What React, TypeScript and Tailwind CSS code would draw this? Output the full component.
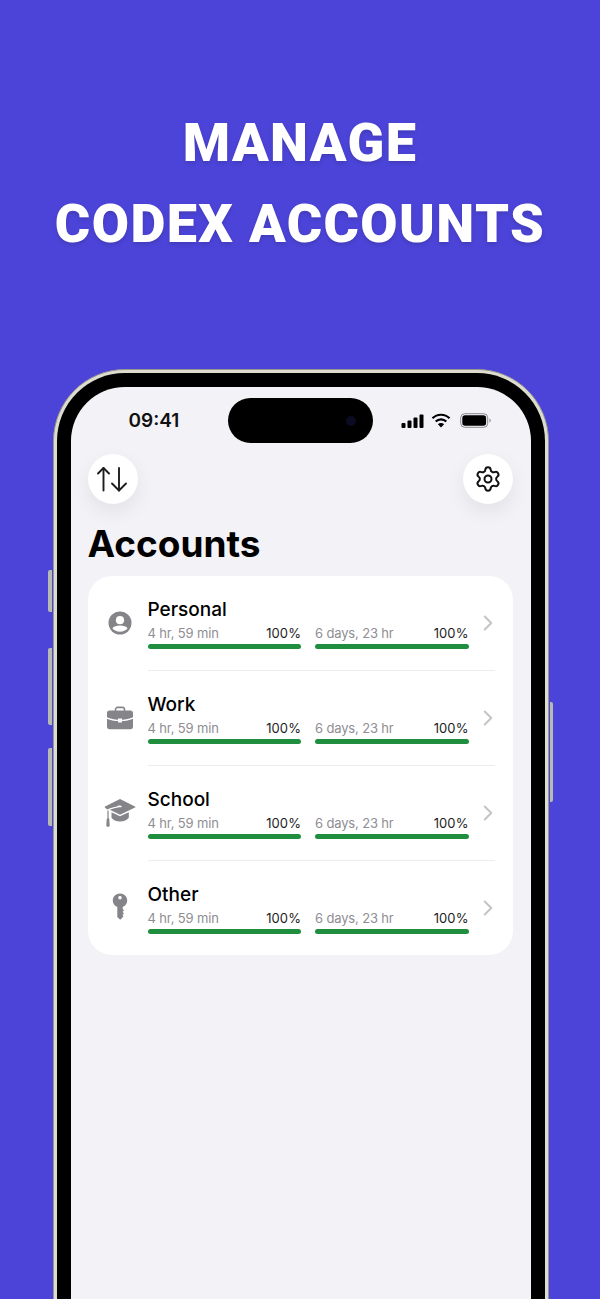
import React from "react";
import { ChevronRight, Settings } from "lucide-react";

function PersonIcon() {
  return (
    <svg width="24" height="24" viewBox="0 0 24 24" fill="none">
      <circle cx="12" cy="12" r="11.5" fill="#858589" />
      <circle cx="12" cy="9.2" r="4.1" fill="#fff" />
      <path d="M4.400 17.600C5.600 15.300 8.400 14.600 12 14.600s6.400.7 7.600 3C17.800 19.600 15.100 20.800 12 20.800s-5.800-1.200-7.600-3.200Z" fill="#fff" />
    </svg>
  );
}
function BriefcaseIcon() {
  return (
    <svg width="28" height="24" viewBox="0 0 28 24" fill="none">
      <path d="M9.500 5V3.600C9.500 2.200 10.400 1.400 11.800 1.400h4.400c1.400 0 2.300.8 2.300 2.200V5" stroke="#858589" strokeWidth="1.600" />
      <path d="M3.400 4.600h21.200c1.400 0 2.400 1 2.400 2.400v4.200c-3.600 1.500-7.400 2.300-11 2.500v-1.200h-4v1.200c-3.600-.2-7.400-1-11-2.500V7c0-1.400 1-2.400 2.400-2.400Z" fill="#858589" />
      <path d="M1 12.700c3.600 1.400 7.400 2.200 11 2.400v1.500h4v-1.500c3.600-.2 7.400-1 11-2.400v8c0 1.500-1 2.500-2.400 2.500H3.400C2 23.200 1 22.200 1 20.700v-8Z" fill="#858589" />
    </svg>
  );
}
function CapIcon() {
  return (
    <svg width="32" height="30" viewBox="0 0 32 30" fill="none">
      <path d="M16 1 31 8.400c.5.3.5.8 0 1.100L16 16.800 5.800 11.800c2.800-1.200 6.200-2.200 9.600-2.600.9.2 1.700.1 2.200-.3.5-.6-.2-1.200-1.600-1.300-1.600-.1-2.800.4-2.800 1-3.600.5-7.200 1.600-10 3L1 9.500c-.5-.3-.5-.8 0-1.100L16 1Z" fill="#858589" />
      <path d="M7.500 14.200 16 18.300l8.800-4.100v5.600c-1.500 2.200-5 3.700-8.800 3.700-3.800 0-7.100-1.500-8.500-3.700v-5.600Z" fill="#858589" />
      <path d="M4 12.400v8" stroke="#858589" strokeWidth="1.200" />
      <path d="M2.700 21.500c0-1 .6-1.600 1.300-1.600s1.300.6 1.300 1.600l.4 6c0 .7-.7 1.300-1.700 1.300s-1.700-.6-1.700-1.300l.4-6Z" fill="#858589" />
    </svg>
  );
}
function KeyIcon() {
  return (
    <svg width="16" height="28" viewBox="0 0 16 28" fill="none">
      <path fillRule="evenodd" clipRule="evenodd" d="M8 .5c4 0 7.200 3 7.200 6.900 0 3-1.900 5.500-4.500 6.500v2.100l1.300 1.300-1.400 1.600 1.400 1.500-1.500 1.600 1 1.200-2.600 3c-.4.400-.8.400-1.200 0L5.300 24V13.900C2.700 12.900.8 10.400.8 7.400.8 3.500 4 .5 8 .5Zm0 2.600c-1 0-1.700.7-1.700 1.600 0 1 .7 1.700 1.700 1.700s1.700-.7 1.700-1.700c0-.9-.7-1.600-1.700-1.600Z" fill="#858589" />
    </svg>
  );
}

function Usage({ label }: { label: string }) {
  return (
    <div className="flex-1">
      <div className="flex justify-between items-center h-[16px] text-[13px] leading-[16px]">
        <span className="text-[#8e8e93] tracking-[-0.15px]">{label}</span>
        <span className="text-[#1c1c1e] tracking-[0.1px]">100%</span>
      </div>
      <div className="mt-[3px] h-[5px] rounded-full bg-[#1f8f3f]" />
    </div>
  );
}

function Row({ name, icon, last }: { name: string; icon: React.ReactNode; last?: boolean }) {
  return (
    <div className={`flex ${last ? "h-[94px]" : "h-[95px]"}`}>
      <div className="w-[60px] shrink-0 flex items-center justify-center pl-[4px] pb-[2px]">{icon}</div>
      <div className={`flex-1 flex mr-[18px] ${last ? "" : "border-b border-[#ececee]"}`}>
        <div className="w-[321px] pt-[22px]">
          <div className="text-[19px] leading-[24px] font-medium text-black">{name}</div>
          <div className="flex gap-[14px] mt-[3px]">
            <Usage label="4 hr, 59 min" />
            <Usage label="6 days, 23 hr" />
          </div>
        </div>
        <div className="flex-1 flex justify-end pt-[34px]">
          <ChevronRight size={26} strokeWidth={1.9} className="text-[#c5c5c9] -mr-[6px]" />
        </div>
      </div>
    </div>
  );
}

function Circle({ children }: { children: React.ReactNode }) {
  return (
    <div className="w-[50px] h-[50px] rounded-full bg-white flex items-center justify-center shadow-[0_8px_20px_rgba(0,0,0,0.07)]">
      {children}
    </div>
  );
}

export default function App() {
  return (
    <div className="h-[1299px] overflow-hidden bg-[#4c44d8] flex flex-col items-center [font-family:Inter,'Liberation_Sans',sans-serif]">
      <h1 className="pt-[102px] text-center text-white font-black text-[54px] leading-[81px] tracking-[1.4px] [font-family:Roboto,sans-serif] [text-shadow:0_2px_4px_rgba(0,0,0,0.15)]">
        <div>MANAGE</div>
        <div>CODEX ACCOUNTS</div>
      </h1>
      <div className="relative self-start ml-[52.500px] mt-[105px] w-[496px] h-[1000px] shrink-0 rounded-[72px] border-[1.5px] border-[#96978f] bg-[#dcdccf] p-[3px]">
        <div className="absolute -left-[6px] top-[200px] w-[4px] h-[42px] rounded-l-[2px] bg-[#b7b9b4]" />
        <div className="absolute -left-[6px] top-[278px] w-[4px] h-[77px] rounded-l-[2px] bg-[#b7b9b4]" />
        <div className="absolute -left-[6px] top-[378px] w-[4px] h-[78px] rounded-l-[2px] bg-[#b7b9b4]" />
        <div className="absolute -right-[5px] top-[332px] w-[3px] h-[100px] rounded-r-[2px] bg-[#b7b9b4]" />
        <div className="h-full rounded-[68px] bg-black p-[14px]">
          <div className="relative h-full rounded-[54px] bg-[#f2f2f7] pl-[17px] pr-[18px] overflow-hidden">
            <div className="flex items-center justify-between h-[67px]">
              <span className="pl-[41px] text-[19px] font-semibold text-[#111] leading-none">09:41</span>
              <div className="flex items-center gap-[6px] pr-[22px]">
                <svg width="24" height="14" viewBox="0 0 24 14" fill="#000">
                  <rect x="0.500" y="9" width="4" height="5" rx="1" />
                  <rect x="6.500" y="6.500" width="4" height="7.500" rx="1" />
                  <rect x="12.500" y="3.500" width="4" height="10.500" rx="1" />
                  <rect x="18.500" y="0.500" width="4" height="13.500" rx="1" />
                </svg>
                <svg width="20" height="15" viewBox="0 0 20 15" fill="none">
                  <path d="M1.500 5.300a12 12 0 0 1 17 0" stroke="#000" strokeWidth="2.200" />
                  <path d="M4.700 8.500a7.500 7.500 0 0 1 10.600 0" stroke="#000" strokeWidth="2.200" />
                  <path d="M6.900 11.200 10 14.500l3.100-3.300a4.400 4.400 0 0 0-6.200 0Z" fill="#000" />
                </svg>
                <svg width="31" height="15" viewBox="0 0 31 15" fill="none" className="ml-[3px]">
                  <rect x="0.700" y="0.700" width="27" height="13.600" rx="4" stroke="#8a8a8e" strokeWidth="1" />
                  <rect x="2.300" y="2.300" width="23.800" height="10.400" rx="2.700" fill="#000" />
                  <path d="M29.500 5.500c.8.300 1.200 1.100 1.200 2s-.4 1.700-1.200 2v-4Z" fill="#8a8a8e" />
                </svg>
              </div>
            </div>
            <div className="absolute left-[157px] top-[11px] w-[145px] h-[45px] rounded-full bg-black flex items-center justify-end pr-[17px]">
              <div className="w-[10px] h-[10px] rounded-full bg-[#0b0b22]" />
            </div>
            <div className="flex justify-between">
              <Circle>
                <svg width="32" height="28" viewBox="0 0 32 28" fill="none" stroke="#1c1c1e" strokeWidth="1.900" strokeLinecap="round" strokeLinejoin="round">
                  <path d="M6.500 25.500V3" />
                  <path d="M1 8.500 6.500 3 12 8.500" />
                  <path d="M22 3V25.500" />
                  <path d="M15 18.500 22 25.500 29 18.500" />
                </svg>
              </Circle>
              <Circle>
                <Settings size={28} strokeWidth={1.7} className="text-[#111]" />
              </Circle>
            </div>
            <div className="mt-[17px] text-[37px] leading-[46px] font-bold text-black">Accounts</div>
            <div className="mt-[9px] rounded-[24px] bg-white">
              <Row name="Personal" icon={<PersonIcon />} />
              <Row name="Work" icon={<BriefcaseIcon />} />
              <Row name="School" icon={<CapIcon />} />
              <Row name="Other" icon={<KeyIcon />} last />
            </div>
          </div>
        </div>
      </div>
    </div>
  );
}
